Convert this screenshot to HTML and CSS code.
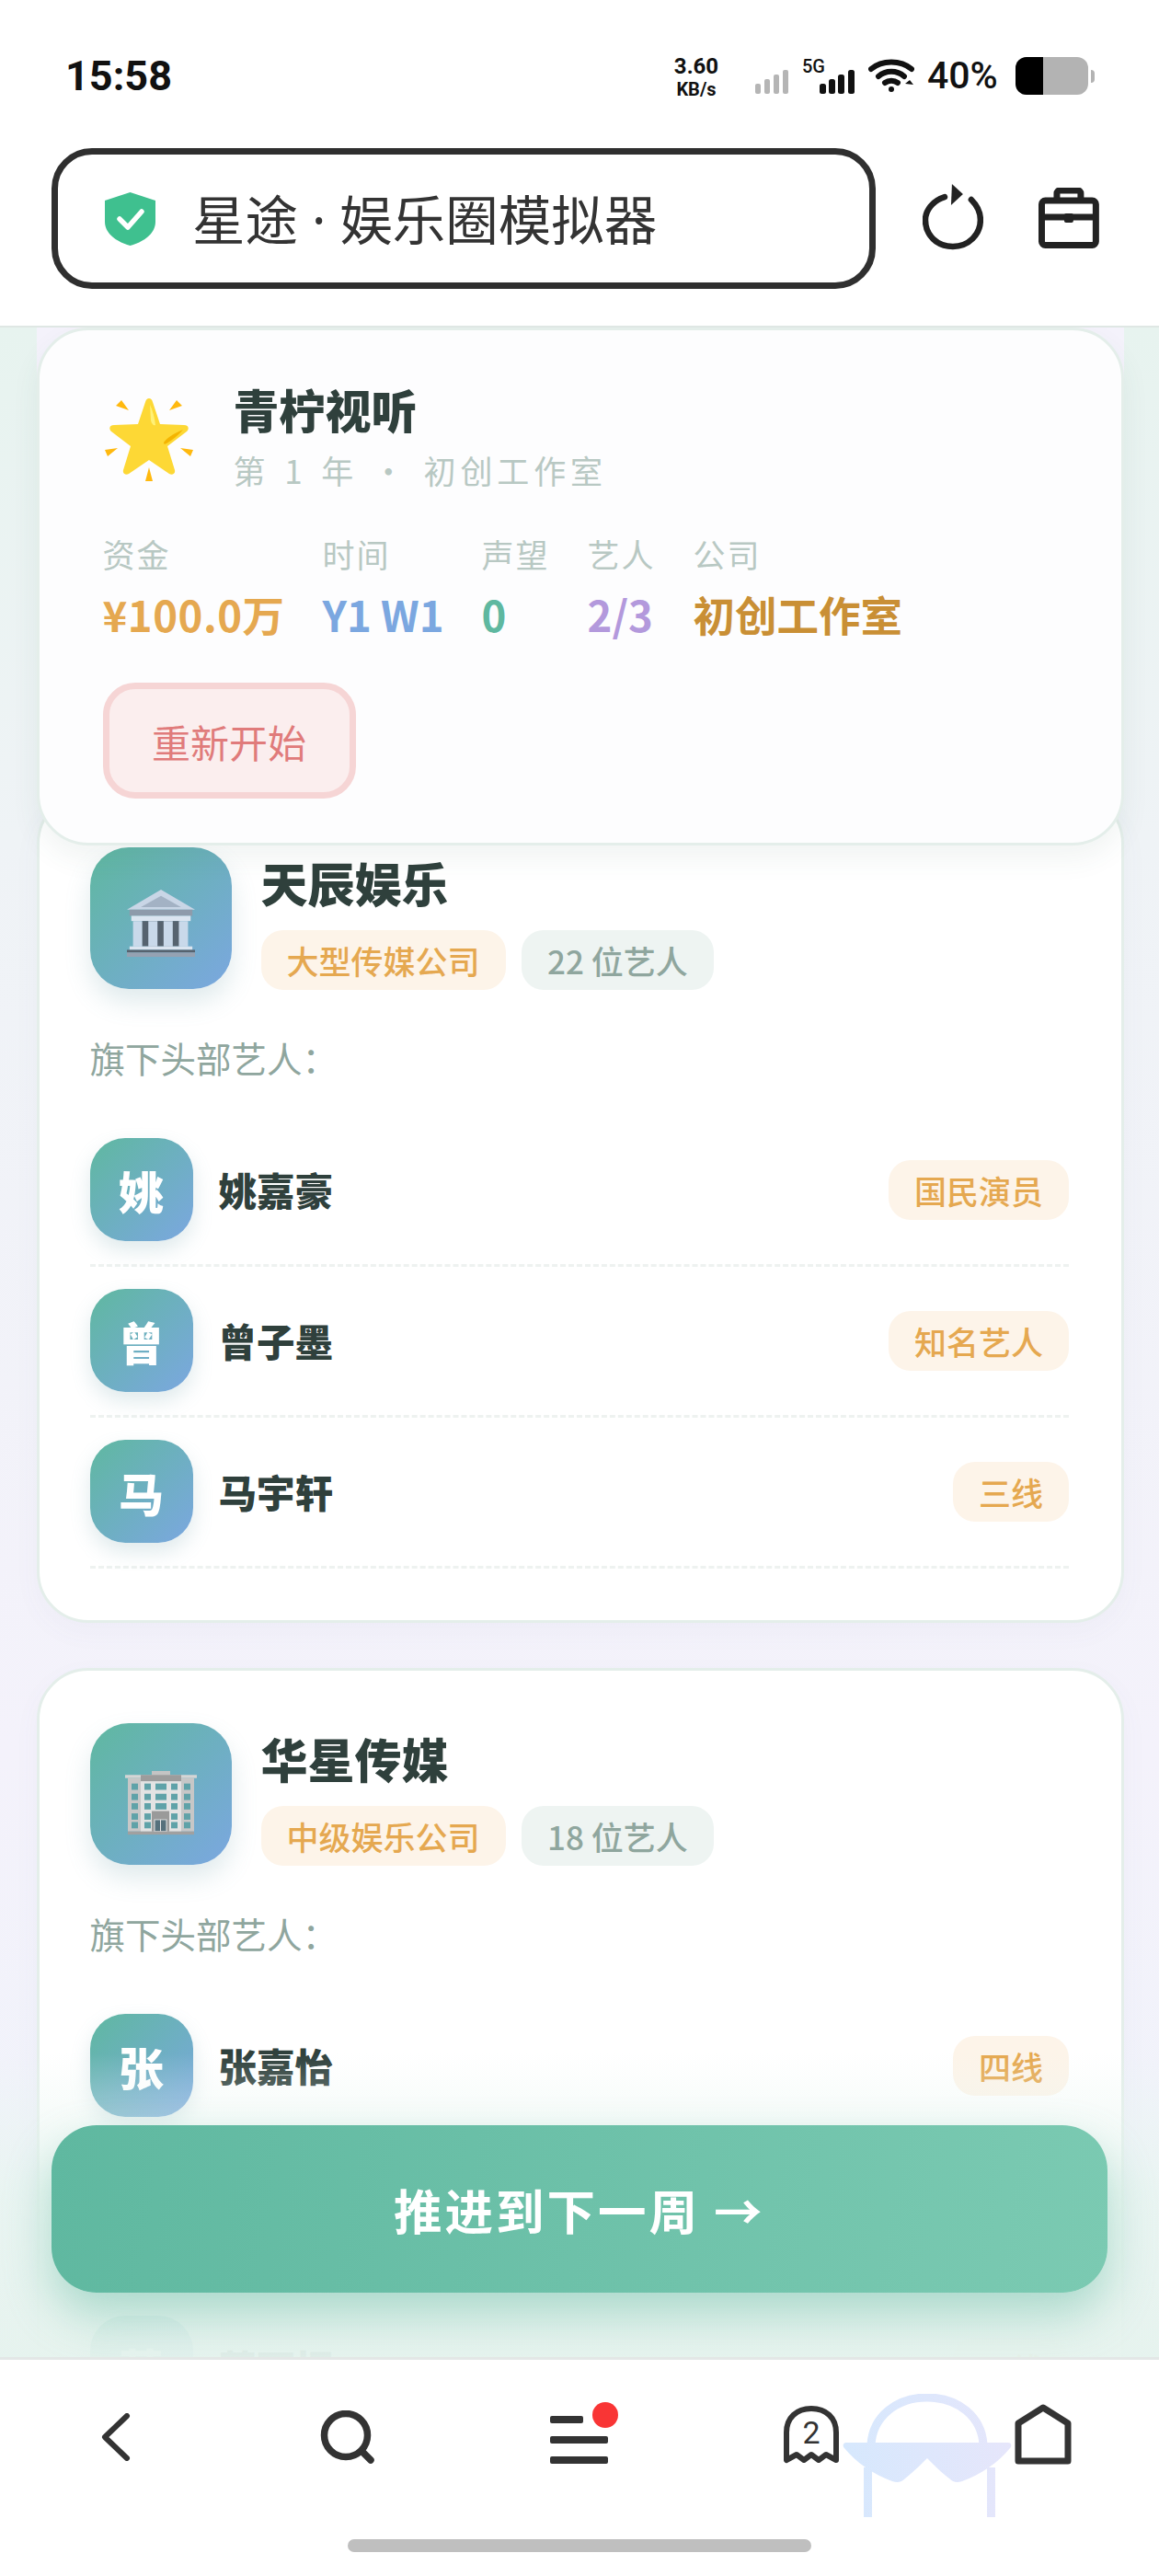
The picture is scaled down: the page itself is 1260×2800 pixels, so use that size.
FILE: index.html
```html
<!DOCTYPE html>
<html lang="zh-CN">
<head>
    <meta charset="UTF-8">
    <meta name="viewport" content="width=device-width, initial-scale=1.0">
    <title>星途 · 娱乐圈模拟器</title>
    <link rel="stylesheet" href="styles.css">
</head>
<body>
<div class="phone">
    <!-- 상태바 -->
    <header class="status">
        <span class="clock">15:58</span>
        <div class="status-right">
            <div class="speed"><b>3.60</b><b class="unit">KB/s</b></div>
            <svg class="sig1" width="36" height="26" viewBox="0 0 36 26" fill="#b5b5b5">
                <rect x="0" y="15" width="6" height="11" rx="2"/><rect x="10" y="10" width="6" height="16" rx="2"/><rect x="20" y="5" width="6" height="21" rx="2"/><rect x="30" y="0" width="6" height="26" rx="2"/>
            </svg>
            <div class="sig2">
                <span class="five">5G</span>
                <svg width="38" height="26" viewBox="0 0 38 26" fill="#111">
                    <rect x="0" y="15" width="7" height="11" rx="2.5"/><rect x="10" y="10" width="7" height="16" rx="2.5"/><rect x="20" y="5" width="7" height="21" rx="2.5"/><rect x="31" y="0" width="7" height="26" rx="2.5"/>
                </svg>
            </div>
            <svg class="wifi" width="50" height="36" viewBox="0 0 50 36" fill="none" stroke="#111" stroke-width="6" stroke-linecap="round">
                <path d="M3 11C15 1 35 1 47 11"/>
                <path d="M11 19C19 12 31 12 39 19"/>
                <path d="M18 26C22 23 28 23 32 26"/>
                <circle cx="25" cy="33" r="3" fill="#111" stroke="none"/>
                <path d="M40 27l5 -4 4 5z" fill="#111" stroke="none"/>
            </svg>
            <span class="pct">40%</span>
            <div class="battery"><i class="level"></i></div>
            <i class="nub"></i>
        </div>
    </header>

    <!-- 주소창 -->
    <nav class="urlbar">
        <div class="address">
            <svg width="55" height="58" viewBox="0 0 55 58">
                <path d="M27.5 0L55 9V32C55 45 42 54 27.5 58C13 54 0 45 0 32V9Z" fill="#3fc08f"/>
                <path d="M16 29L25 38L40 21" fill="none" stroke="#fff" stroke-width="5.5" stroke-linecap="round" stroke-linejoin="round"/>
            </svg>
            <span class="address-text">星途 · 娱乐圈模拟器</span>
        </div>
        <svg class="refresh" width="66" height="72" viewBox="0 0 66 72" fill="none">
            <path d="M24 14C11 18 3 29 3 39C3 56 16 68 33 68C50 68 63 55 63 39C63 30 59 23 53 17" stroke="#222" stroke-width="6.5" stroke-linecap="round"/>
            <path d="M32 0L44 11L31 23Z" fill="#222"/>
        </svg>
        <svg class="bag" width="66" height="66" viewBox="0 0 66 66" fill="none" stroke="#222" stroke-width="7" stroke-linejoin="round">
            <rect x="3.5" y="14" width="59" height="48.5" rx="4"/>
            <path d="M20 14V6a3 3 0 0 1 3-3H43a3 3 0 0 1 3 3V14"/>
            <path d="M3.5 32H62.5"/>
            <rect x="28" y="28" width="10" height="10" rx="2" fill="#222" stroke="none"/>
        </svg>
    </nav>

    <main class="viewport">
        <div class="panel-wrap">
            <section class="panel">
                <div class="panel-head">
                    <svg class="star" width="100" height="94" viewBox="0 0 100 94">
                        <path d="M50 3C52 3 53 4 54 7L62 31L88 32C93 32 94 36 91 39L70 55L78 81C79 85 75 87 72 85L50 70L28 85C25 87 21 85 22 81L30 55L9 39C6 36 7 32 12 32L38 31L46 7C47 4 48 3 50 3Z" fill="#fdd835"/>
                        <path d="M51 10C54 16 56 24 57 32C55 33 53 31 52 27Z" fill="#fff176"/>
                        <path d="M66 51C69 46 76 42 87 37C82 43 76 48 69 52C67 53 66 53 66 51Z" fill="#f4b400"/>
                        <path d="M14 11L20 5L28 16Z M86 11L80 5L72 16Z M2 59L16 57L5 66Z M98 59L84 57L95 66Z M50 78L54 93H46Z" fill="#ffb90f"/>
                    </svg>
                    <div>
                        <h1 class="panel-title">青柠视听</h1>
                        <p class="panel-sub">第 1 年 · 初创工作室</p>
                    </div>
                </div>
                <dl class="stats">
                    <div class="stat"><dt>资金</dt><dd class="c-money">¥100.0万</dd></div>
                    <div class="stat"><dt>时间</dt><dd class="c-time">Y1 W1</dd></div>
                    <div class="stat"><dt>声望</dt><dd class="c-fame">0</dd></div>
                    <div class="stat"><dt>艺人</dt><dd class="c-artist">2/3</dd></div>
                    <div class="stat"><dt>公司</dt><dd class="c-company">初创工作室</dd></div>
                </dl>
                <button class="restart">重新开始</button>
            </section>
        </div>

        <article class="card">
            <div class="card-head">
                <div class="logo">
                    <svg class="logo-bank" width="74" height="76" viewBox="0 0 78 78">
                        <path d="M39 0L78 23H0Z" fill="#c9d6e6"/>
                        <path d="M39 7L62 20H16Z" fill="#a3b2c4"/>
                        <rect x="3" y="23" width="72" height="7" fill="#8e9bab"/>
                        <rect x="5" y="30" width="68" height="6" fill="#dbe5f0"/>
                        <rect x="17" y="36" width="44" height="29" fill="#56636f"/>
                        <path d="M7 36H17.500V65H7Z M24.500 36H35V65H24.500Z M42 36H52.500V65H42Z M59.500 36H70V65H59.500Z" fill="#c9d9ea"/>
                        <rect x="3" y="65" width="72" height="4" fill="#dbe5f0"/>
                        <rect x="0" y="69" width="78" height="3" fill="#56636f"/>
                        <rect x="0" y="72" width="78" height="5" fill="#95a2b2"/>
                    </svg>
                </div>
                <div class="card-info">
                    <h2 class="company">天辰娱乐</h2>
                    <div class="tags"><span class="tag tag-gold">大型传媒公司</span><span class="tag tag-grey">22 位艺人</span></div>
                </div>
            </div>
            <p class="sec-label">旗下头部艺人：</p>
            <ul class="artists">
                <li class="artist"><span class="avatar">姚</span><span class="artist-name">姚嘉豪</span><span class="tag tag-gold">国民演员</span></li>
                <li class="artist"><span class="avatar">曾</span><span class="artist-name">曾子墨</span><span class="tag tag-gold">知名艺人</span></li>
                <li class="artist"><span class="avatar">马</span><span class="artist-name">马宇轩</span><span class="tag tag-gold">三线</span></li>
            </ul>
        </article>

        <article class="card">
            <div class="card-head">
                <div class="logo">
                    <svg class="logo-office" width="78" height="70" viewBox="0 0 78 82" preserveAspectRatio="none">
                        <rect x="29" y="0" width="20" height="6" fill="#c4c4c4"/>
                        <rect x="0" y="5" width="78" height="4" fill="#d5d5d5"/>
                        <rect x="3" y="9" width="72" height="68" fill="#c7c7c7"/>
                        <rect x="17" y="9" width="44" height="68" fill="#e3e3e3"/>
                        <rect x="17" y="5" width="44" height="8" fill="#9c9c9c"/>
                        <g fill="#5fa2a8">
                            <rect x="7" y="16" width="7" height="8"/><rect x="21" y="16" width="7" height="8"/><rect x="33" y="16" width="12" height="8"/><rect x="50" y="16" width="7" height="8"/><rect x="64" y="16" width="7" height="8"/>
                            <rect x="7" y="29" width="7" height="8"/><rect x="21" y="29" width="7" height="8"/><rect x="33" y="29" width="12" height="8"/><rect x="50" y="29" width="7" height="8"/><rect x="64" y="29" width="7" height="8"/>
                            <rect x="7" y="41" width="7" height="8"/><rect x="21" y="41" width="7" height="8"/><rect x="33" y="41" width="12" height="8"/><rect x="50" y="41" width="7" height="8"/><rect x="64" y="41" width="7" height="8"/>
                            <rect x="7" y="54" width="7" height="8"/><rect x="21" y="54" width="7" height="8"/><rect x="50" y="54" width="7" height="8"/><rect x="64" y="54" width="7" height="8"/>
                            <rect x="7" y="65" width="7" height="8"/><rect x="21" y="65" width="7" height="8"/><rect x="50" y="65" width="7" height="8"/><rect x="64" y="65" width="7" height="8"/>
                        </g>
                        <rect x="29" y="51" width="19" height="26" fill="#9a9a9a"/>
                        <rect x="32" y="62" width="13" height="15" fill="#56707c" stroke="#e8e8e8" stroke-width="1"/>
                        <rect x="38" y="62" width="1" height="15" fill="#e8e8e8"/>
                        <rect x="3" y="77" width="72" height="4" fill="#a0a0a0"/>
                    </svg>
                </div>
                <div class="card-info">
                    <h2 class="company">华星传媒</h2>
                    <div class="tags"><span class="tag tag-gold">中级娱乐公司</span><span class="tag tag-grey">18 位艺人</span></div>
                </div>
            </div>
            <p class="sec-label">旗下头部艺人：</p>
            <ul class="artists">
                <li class="artist"><span class="avatar">张</span><span class="artist-name">张嘉怡</span><span class="tag tag-gold">四线</span></li>
                <li class="artist"><span class="avatar">林</span><span class="artist-name">林一鸣</span><span class="tag tag-gold">五线</span></li>
                <li class="artist"><span class="avatar">萧</span><span class="artist-name">萧雨桐</span><span class="tag tag-gold">五线</span></li>
            </ul>
        </article>

        <!-- 하단 고정 버튼 + 페이드 -->
        <div class="fade">
            <button class="next">推进到下一周 →</button>
        </div>
    </main>

    <footer class="bottom">
        <div class="tabs">
            <svg class="t-back" width="32" height="52" viewBox="0 0 32 52" fill="none" stroke="#333" stroke-width="6" stroke-linecap="round" stroke-linejoin="round"><path d="M28 3L4 26L28 49"/></svg>
            <svg class="t-search" width="60" height="60" viewBox="0 0 60 60" fill="none" stroke="#333" stroke-width="7.500" stroke-linecap="round"><circle cx="28" cy="27" r="23.500"/><path d="M46 45L55 54"/></svg>
            <div class="t-menu">
                <i class="bar short"></i><i class="bar"></i><i class="bar"></i>
                <i class="dot"></i>
            </div>
            <div class="t-ghost">
                <svg width="60" height="64" viewBox="0 0 60 64" fill="none" stroke="#333" stroke-width="6" stroke-linejoin="round"><path d="M3 59V29C3 13 14 3 30 3C46 3 57 13 57 29V59L46 53L38 59L30 53L22 59L14 53Z"/></svg>
                <span class="ghost-num">2</span>
            </div>
            <svg class="t-home" width="62" height="66" viewBox="0 0 62 66" fill="none" stroke="#333" stroke-width="7" stroke-linejoin="round"><path d="M31 4L58 21V62H4V21Z"/></svg>
        </div>
        <svg class="mark" width="184" height="134" viewBox="0 0 184 134" fill="none">
            <defs><linearGradient id="mk" gradientUnits="userSpaceOnUse" x1="0" y1="0" x2="184" y2="0"><stop offset="0" stop-color="#d6e8fd"/><stop offset="1" stop-color="#e6e6fb"/></linearGradient></defs>
            <path d="M31 55C33 25 58 4 92 4C126 4 151 25 153 55" stroke="url(#mk)" stroke-width="9" fill="none"/>
            <path d="M4 53H180C184 53 184 57 182 59C170 74 150 88 130 95C124 97 120 96 116 92C106 84 98 76 92 70C86 76 78 84 68 92C64 96 60 97 54 95C34 88 14 74 2 59C0 57 0 53 4 53Z" fill="url(#mk)"/>
            <path d="M27.500 80V134M161.500 80V134" stroke="url(#mk)" stroke-width="9"/>
        </svg>
        <i class="home-bar"></i>
    </footer>
</div>
</body>
</html>
```

FILE: styles.css
```css
* {margin:0; padding:0; box-sizing:border-box;}
html, body {width:1260px; height:2800px; overflow:hidden; background:#fff;}
body {font-family:"Noto Sans CJK SC", "Noto Sans", sans-serif; color:#2f403c;}
ul {list-style:none;}
button {font-family:inherit; cursor:pointer;}

.phone {width:1260px; height:2800px; display:flex; flex-direction:column;}

/* status bar */
.status {height:161px; flex:none; padding:60px 70px 0 71px; display:flex; justify-content:space-between; align-items:flex-start; background:#fff;}
.clock {font:700 45px/46px Roboto, sans-serif; color:#111;}
.status-right {display:flex; align-items:flex-start; color:#111;}
.speed {width:52px; margin-right:38px; display:flex; flex-direction:column; align-items:center; font-family:Roboto, sans-serif; line-height:1;}
.speed b {font-size:24px; font-weight:700; line-height:24px;}
.speed .unit {font-size:20px; line-height:22px; margin-top:2px;}
.sig1 {margin-top:16px; margin-right:16px;}
.sig2 {position:relative; width:56px; padding-left:18px; padding-top:16px; margin-right:15px;}
.sig2 svg {display:block;}
.five {position:absolute; left:-1px; top:2px; font:500 20px/20px Roboto, sans-serif;}
.wifi {margin-top:4px; margin-right:14px;}
.pct {font:500 41px/42px Roboto, sans-serif; width:96px; margin-top:1px;}
.battery {width:79px; height:41px; margin-top:2px; border-radius:12px; background:#b3b3b3; overflow:hidden;}
.battery .level {display:block; width:30px; height:100%; background:#000;}
.nub {width:4px; height:14px; margin:16px 0 0 3px; border-radius:0 4px 4px 0; background:#b3b3b3;}

/* url bar */
.urlbar {height:195px; flex:none; padding:0 65px 42px 56px; display:flex; align-items:flex-start; background:#fff; border-bottom:2px solid #dfe7e4; position:relative; z-index:5;}
.address {width:898px; height:153px; border:7px solid #2f2f2f; border-radius:44px; padding-left:51px; display:flex; align-items:center; gap:40px; background:#fff;}
.address-text {font-family:"Noto Sans", "Noto Sans CJK SC", sans-serif; font-size:57.5px; line-height:66px; margin-top:2px; color:#333; white-space:nowrap;}
.refresh {margin:39px 0 0 51px;}
.bag {margin:43px 0 0 60px;}

/* main */
.viewport {flex:1; min-height:0; position:relative; overflow:hidden; padding:0 38px 0 39.5px; display:flex; flex-direction:column; gap:49px; background:linear-gradient(180deg, #e7f3ef 0, #eff3f6 25%, #f4f2fb 70%, #eff3fa 100%);}

.panel-wrap {flex:none; position:relative; z-index:2; margin-bottom:-107px; background:linear-gradient(#f4f2fb, #f1f3fa) no-repeat top/100% 504px;}
.panel {height:563px; padding:55px 68px 0 69px; border:3.5px solid #e4eeea; border-radius:56px; background:#fdfdfe; box-shadow:0 14px 30px rgba(60,100,90,.07);}
.panel-head {display:flex; align-items:flex-start;}
.star {flex:none; margin:16px 42px 0 0;}
.panel-title {font-size:50px; font-weight:900; line-height:60px; color:#2f403c;}
.panel-sub {font-size:35px; line-height:50px; margin-top:12px; letter-spacing:4.9px; word-spacing:3px; color:#b8c8c3; white-space:pre;}

.stats {display:flex; gap:41px; margin-top:41px;}
.stat dt {font-size:35px; line-height:50px; letter-spacing:2px; color:#b8c8c3;}
.stat dd {font-size:45.5px; font-weight:700; line-height:66px; margin-top:7px; white-space:nowrap;}
.c-money {color:#e5a850; letter-spacing:.5px;}
.c-time {color:#7ba7e0;}
.c-fame {color:#5fb8a0;}
.c-artist {color:#b399dc;}
.c-company {color:#c98f35;}

.restart {display:block; margin-top:42px; width:275px; height:126px; border:7px solid #f6d5d5; border-radius:35px; background:#fbeeee; color:#e07b7b; font-size:42px; font-weight:400;}

/* company card */
.card {flex:none; padding:57px 57px 0 55px; background:#fff; border:3.5px solid #e4eeea; border-radius:56px; box-shadow:0 10px 30px rgba(90,90,160,.04);}
.card-head {display:flex; gap:32px; align-items:flex-start;}
.logo {flex:none; width:154px; height:154px; border-radius:42px; display:flex; align-items:center; justify-content:center; background:linear-gradient(135deg, #5fb8a0, #7ba7e0); box-shadow:0 14px 28px rgba(95,150,160,.2);}
.logo-bank {margin-top:12px;}
.logo-office {margin-top:20px;}
.company {font-size:51px; font-weight:900; line-height:74px; margin-top:1px; color:#2f403c;}
.tags {display:flex; gap:17.5px; margin-top:15px;}
.tag {display:inline-flex; align-items:center; height:65px; padding:0 28px; border-radius:24px; font-size:35px; font-weight:500; white-space:nowrap;}
.tag-gold {background:#fdf4e9; color:#e5a850;}
.tag-grey {background:#eef4f2; color:#8fa69e;}

.sec-label {font-size:38.5px; line-height:58px; margin-top:44px; color:#8fa69e;}
.artists {margin-top:35px; padding-bottom:56px;}
.artist {display:flex; align-items:center; height:164px; padding-bottom:1px; border-bottom:3px dashed #eef2f0;}
.avatar {flex:none; width:112px; height:112px; border-radius:38px; display:flex; align-items:center; justify-content:center; background:linear-gradient(135deg, #5fb8a0, #7ba7e0); color:#fff; font-size:49px; font-weight:900; box-shadow:0 10px 22px rgba(95,150,160,.2);}
.artist-name {flex:1; margin-left:28px; font-size:41.500px; font-weight:900; color:#2f403c;}

/* bottom fade + action button */
.fade {position:absolute; left:0; right:0; bottom:0; height:330px; padding:78px 56.5px 67px 56px; z-index:3; background:linear-gradient(180deg, rgba(232,245,240,0) 0, rgba(232,245,240,.8) 45%, rgba(230,243,238,.97) 100%);}
.next {display:block; width:100%; height:182px; border:0; border-radius:49px; background:linear-gradient(100deg, #5fb8a0, #7bcab2); color:#fff; font-size:52.5px; font-weight:700; letter-spacing:3px; box-shadow:0 24px 50px rgba(95,184,160,.45);}

/* bottom nav */
.bottom {height:238px; flex:none; position:relative; background:#fff; border-top:3px solid #e3e7e6;}
.tabs {height:120px; padding:50px 0 0 110px; display:flex; align-items:flex-start;}
.t-back {margin-top:8px;}
.t-search {margin:5px 0 0 206px;}
.t-menu {position:relative; width:63px; height:52px; margin:11px 0 0 190px; display:flex; flex-direction:column; justify-content:space-between; align-items:flex-start;}
.bar {display:block; width:63px; height:8px; border-radius:2px; background:#333;}
.bar.short {width:36px;}
.dot {position:absolute; left:46px; top:-15px; width:28px; height:28px; border-radius:50%; background:#f93535;}
.t-ghost {position:relative; width:60px; height:64px; margin:0 0 0 191px;}
.t-ghost svg {display:block;}
.ghost-num {position:absolute; left:0; right:0; top:11px; text-align:center; font:400 34px/36px Roboto, sans-serif; color:#333;}
.t-home {margin:-2px 0 0 191px;}
.mark {position:absolute; left:916px; top:37px;}
.home-bar {position:absolute; left:378px; top:195px; width:504px; height:14px; border-radius:7px; background:#bfbfbf;}
```
